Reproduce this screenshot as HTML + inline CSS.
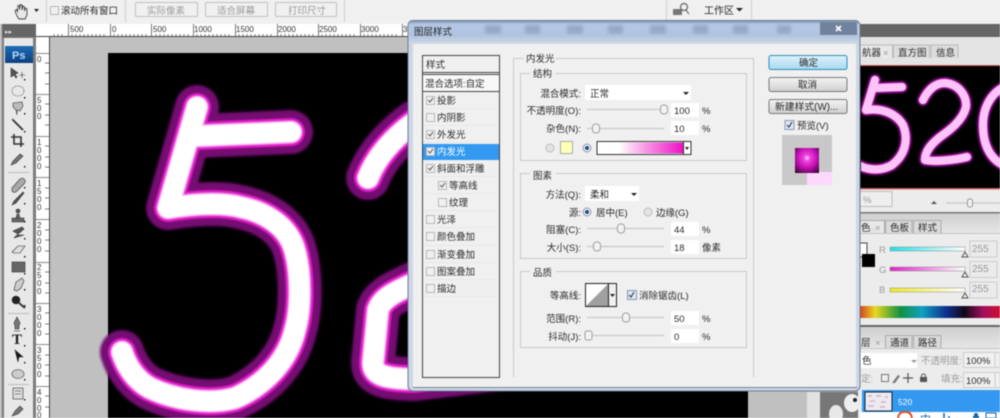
<!DOCTYPE html>
<html><head><meta charset="utf-8"><style>
html,body{margin:0;padding:0;width:1000px;height:418px;overflow:hidden;background:#f0f0f0}
svg{display:block;filter:blur(.45px)}
text{font-family:"Liberation Sans","Noto Sans CJK SC",sans-serif;font-size:9.5px;fill:#2a2a2a}
.r{text-anchor:end}
.g{fill:#9a9a9a}
.s{font-size:8px;fill:#333}
.fs{fill:none;stroke:#c8c8c8}
.cb{fill:#f0f0f0;stroke:#b8b8b8}
.tr{stroke:#cdcdcd;stroke-width:1.5}
.th{fill:#f2f2f2;stroke:#a0a0a0}
</style></head><body>
<svg width="1000" height="418" viewBox="0 0 1000 418" xmlns="http://www.w3.org/2000/svg">
<defs>
<filter id="b1"><feGaussianBlur stdDeviation="1.2"/></filter>
<filter id="b2"><feGaussianBlur stdDeviation=".5"/></filter>
<filter id="b3"><feGaussianBlur stdDeviation="1.8"/></filter>
<linearGradient id="ps" x1="0" y1="0" x2="0" y2="1"><stop offset="0" stop-color="#1c6cb8"/><stop offset="1" stop-color="#0d3f7e"/></linearGradient>
<linearGradient id="mg" x1="0" y1="0" x2="1" y2="0"><stop offset="0" stop-color="#fff"/><stop offset=".25" stop-color="#fff"/><stop offset=".6" stop-color="#f78be0"/><stop offset="1" stop-color="#f010c8"/></linearGradient>
<linearGradient id="tt" x1="0" y1="0" x2="0" y2="1"><stop offset="0" stop-color="#8298b8"/><stop offset=".15" stop-color="#b4c8e6"/><stop offset=".65" stop-color="#b0c4e0"/><stop offset="1" stop-color="#d2dae4"/></linearGradient>
<linearGradient id="btn" x1="0" y1="0" x2="0" y2="1"><stop offset="0" stop-color="#f4f4f4"/><stop offset="1" stop-color="#d0d0d0"/></linearGradient>
<linearGradient id="btb" x1="0" y1="0" x2="0" y2="1"><stop offset="0" stop-color="#dff2fb"/><stop offset="1" stop-color="#a8d8f0"/></linearGradient>
<linearGradient id="tab" x1="0" y1="0" x2="0" y2="1"><stop offset="0" stop-color="#cfcfcf"/><stop offset="1" stop-color="#e6e6e6"/></linearGradient>
<linearGradient id="cy" x1="0" y1="0" x2="1" y2="0"><stop offset="0" stop-color="#20e0e8"/><stop offset="1" stop-color="#fff"/></linearGradient>
<linearGradient id="mz" x1="0" y1="0" x2="1" y2="0"><stop offset="0" stop-color="#e020c8"/><stop offset="1" stop-color="#fff"/></linearGradient>
<linearGradient id="ye" x1="0" y1="0" x2="1" y2="0"><stop offset="0" stop-color="#f0e820"/><stop offset="1" stop-color="#fff"/></linearGradient>
<linearGradient id="sp" x1="0" y1="0" x2="1" y2="0"><stop offset="0" stop-color="#d03020"/><stop offset=".12" stop-color="#e8d820"/><stop offset=".3" stop-color="#109040"/><stop offset=".45" stop-color="#10a0c0"/><stop offset=".62" stop-color="#103090"/><stop offset=".75" stop-color="#100818"/><stop offset=".88" stop-color="#a01060"/><stop offset="1" stop-color="#d01030"/></linearGradient>
<radialGradient id="pv" cx=".5" cy=".4" r=".75"><stop offset="0" stop-color="#ffd0ff"/><stop offset=".18" stop-color="#f040e0"/><stop offset=".55" stop-color="#c010b0"/><stop offset="1" stop-color="#30042c"/></radialGradient>
<clipPath id="nav"><rect x="861" y="66" width="139" height="122"/></clipPath>
<path id="p5" d="M197,107 L168,208 M197,136 L291,132 M168,208 C200,203 225,203 240,207 C265,212 285,225 293,245 C302,270 301,310 295,330 C288,360 265,385 235,398 C210,405 175,400 150,388 C135,380 126,365 122,352 M368,178 C375,160 390,140 415,122 M415,283 C395,292 382,298 378,310 L373,362 C372,375 385,379 415,379 L505,368"/>
<path id="nvp" d="M875,80L866,110M875,88L902,87M866,110C880,108 895,112 903,125C909,140 905,155 892,165C880,172 865,170 855,163M923,100C928,90 935,83 945,83C958,84 967,95 966,107C963,120 950,130 940,137C930,145 925,152 925,160C935,162 955,160 967,157M1015,85C995,85 983,105 983,125C983,150 995,167 1015,167"/>
</defs>

<!-- top option bar -->
<rect width="1000" height="24" fill="#f0f0f0"/>
<path d="M46.500,0V22M125.500,0V22M344.500,0V22M666.500,0V20M751.500,0V20" stroke="#cfcfcf"/>
<path d="M15,11l2,5 2,3h6l2-4v-6l-1.500-1-1,3v-4l-1.500-1-1,4v-5l-1.500-.5-1,5v-4l-1.500 0-.5,6-1-2z" fill="#e8e8e8" stroke="#444" stroke-width=".9"/>
<path d="M34,9h5l-2.500,3z" fill="#222"/>
<rect x="50.500" y="6.500" width="8" height="8" class="cb"/>
<text x="61" y="14">滚动所有窗口</text>
<g fill="#f0f0f0" stroke="#c0c0c0"><rect x="135.500" y="2.500" width="62" height="14" rx="1"/><rect x="205.500" y="2.500" width="62" height="14" rx="1"/><rect x="275.500" y="2.500" width="61" height="14" rx="1"/></g>
<text x="147" y="14" class="g">实际像素</text><text x="217" y="14" class="g">适合屏幕</text><text x="288" y="14" class="g">打印尺寸</text>
<rect x="673" y="9" width="9" height="6" fill="#777"/><circle cx="684" cy="7" r="3.500" fill="none" stroke="#666" stroke-width="1.200"/><path d="M686,10l3,4" stroke="#555"/>
<text x="704" y="14" style="font-size:10px">工作区</text><path d="M736,8h7l-3.500,3.500z" fill="#222"/>

<!-- canvas -->
<rect x="36" y="24" width="825" height="394" fill="#c0c0c0"/>
<rect x="108" y="53" width="640" height="365" fill="#000"/>
<use href="#p5" fill="none" stroke="#740a72" stroke-width="44" stroke-linecap="round" stroke-linejoin="round" filter="url(#b1)"/>
<use href="#p5" fill="none" stroke="#e01cc8" stroke-width="28" stroke-linecap="round" stroke-linejoin="round" filter="url(#b2)"/>
<use href="#p5" fill="none" stroke="#f8a8ee" stroke-width="23" stroke-linecap="round" stroke-linejoin="round" filter="url(#b2)"/>
<use href="#p5" fill="none" stroke="#fff" stroke-width="20" stroke-linecap="round" stroke-linejoin="round" filter="url(#b2)"/>
<rect x="748" y="392" width="60" height="26" fill="#c0c0c0"/><rect x="807" y="392" width="14" height="26" fill="#e2e2e2"/><rect x="820" y="392" width="42" height="26" fill="#777"/>
<ellipse cx="852" cy="403" rx="8" ry="9" fill="#eee"/><ellipse cx="836" cy="414" rx="7" ry="9" fill="#e8e8e8"/><circle cx="855" cy="400" r="2" fill="#222"/>

<!-- rulers -->
<rect x="36" y="24" width="372" height="13" fill="#fff"/><rect x="36" y="37" width="14" height="381" fill="#fff"/>
<path d="M36,36.500H408M49.500,37V418" stroke="#444"/>
<path d="M68.500,24V36M110.500,24V36M151.500,24V36M193.500,24V36M235.500,24V36M277.500,24V36M318.500,24V36M360.500,24V36M402.500,24V36" stroke="#555" stroke-width=".8"/>
<path d="M54,36V34M58,36V34M62,36V34M72,36V34M76,36V34M80,36V34M84,36V34M88,36V34M92,36V34M96,36V34M100,36V34M104,36V34M114,36V34M118,36V34M122,36V34M126,36V34M130,36V34M134,36V34M138,36V34M142,36V34M146,36V34M156,36V34M160,36V34M164,36V34M168,36V34M172,36V34M176,36V34M180,36V34M184,36V34M188,36V34M197,36V34M201,36V34M205,36V34M209,36V34M213,36V34M217,36V34M221,36V34M225,36V34M229,36V34M239,36V34M243,36V34M247,36V34M251,36V34M255,36V34M259,36V34M263,36V34M267,36V34M271,36V34M281,36V34M285,36V34M289,36V34M293,36V34M297,36V34M301,36V34M305,36V34M309,36V34M313,36V34M322,36V34M326,36V34M330,36V34M334,36V34M338,36V34M342,36V34M346,36V34M350,36V34M354,36V34M364,36V34M368,36V34M372,36V34M376,36V34M380,36V34M384,36V34M388,36V34M392,36V34M396,36V34" stroke="#555" stroke-width=".7"/>
<text class="s" x="70" y="32">500</text><text class="s" x="112" y="32">0</text><text class="s" x="153" y="32">500</text><text class="s" x="194" y="32">1000</text><text class="s" x="236" y="32">1500</text><text class="s" x="278" y="32">2000</text><text class="s" x="319" y="32">2500</text><text class="s" x="361" y="32">3000</text><text class="s" x="403" y="32">35</text>
<path d="M36,53.500H49M36,94.500H49M36,136.500H49M36,177.500H49M36,219.500H49M36,262.500H49M36,303.500H49M36,344.500H49M36,386.500H49" stroke="#666" stroke-width=".8"/>
<path d="M45,63H49M45,73H49M45,84H49M45,104H49M45,115H49M45,125H49M45,146H49M45,157H49M45,167H49M45,188H49M45,198H49M45,209H49M45,230H49M45,240H49M45,251H49M45,272H49M45,283H49M45,293H49M45,313H49M45,324H49M45,334H49M45,355H49M45,365H49M45,376H49M45,396H49M45,407H49" stroke="#555" stroke-width=".7"/>
<text class="s" x="37" y="62">0</text>
<text class="s" x="37" y="103">5</text><text class="s" x="37" y="111">0</text><text class="s" x="37" y="119">0</text>
<text class="s" x="37" y="145">1</text><text class="s" x="37" y="153">0</text><text class="s" x="37" y="161">0</text><text class="s" x="37" y="169">0</text>
<text class="s" x="37" y="186">1</text><text class="s" x="37" y="194">5</text><text class="s" x="37" y="202">0</text><text class="s" x="37" y="210">0</text>
<text class="s" x="37" y="228">2</text><text class="s" x="37" y="236">0</text><text class="s" x="37" y="244">0</text><text class="s" x="37" y="252">0</text>
<text class="s" x="37" y="270">2</text><text class="s" x="37" y="278">5</text><text class="s" x="37" y="286">0</text><text class="s" x="37" y="294">0</text>
<text class="s" x="37" y="312">3</text><text class="s" x="37" y="320">0</text><text class="s" x="37" y="328">0</text><text class="s" x="37" y="336">0</text>
<text class="s" x="37" y="353">3</text><text class="s" x="37" y="361">5</text><text class="s" x="37" y="369">0</text><text class="s" x="37" y="377">0</text>
<text class="s" x="37" y="395">4</text><text class="s" x="37" y="403">0</text><text class="s" x="37" y="411">0</text><text class="s" x="37" y="418">0</text>

<!-- tools panel -->
<rect x="0" y="24" width="36" height="394" fill="#7c7c7c"/>
<rect x="0" y="24" width="2" height="394" fill="#b8b8b8"/>
<rect x="2" y="24" width="34" height="13" fill="#666"/>
<text x="5" y="34" style="font-size:7px;fill:#ddd">▸▸</text>
<rect x="4" y="38" width="29" height="380" fill="#e8e8e8"/>
<rect x="5" y="46" width="28" height="17" fill="url(#ps)"/>
<text x="12" y="59" style="font-size:11px;font-weight:bold;fill:#b8d8f8">Ps</text>
<g fill="#555" stroke="#333" stroke-width=".6">
<path d="M11,68l7,5-3,1 2,3-1,1-2-3-3,2z"/><path d="M19,75h6M22,72v6" fill="none"/>
<ellipse cx="18" cy="91" rx="6" ry="5" fill="#e8e8e8" stroke-dasharray="1.500 1"/>
<path d="M13,103l9,-1 1,4-3,5-3-1 0,5-1,-5-3-3z" fill="#bbb"/>
<path d="M12,119l11,11" stroke-width="1.800" fill="none"/><path d="M12,120l2-2" stroke="#bbb" fill="none"/>
<path d="M14,134v10h10M11,137h10v10" fill="none" stroke-width="1.600"/>
<path d="M11,165l2-4 7-7 3,2-7,7z" fill="#777"/>
<path d="M12,188l8-9q3-2 5,1q1,2-1,4l-8,8q-3,1-4-1z" fill="#aaa"/>
<path d="M12,205l2-4 9-9 1,1-8,10z" fill="#555"/>
<path d="M12,218h12v4h-12z M16,218l1-4h2l1,4z" fill="#666"/><circle cx="18" cy="211" r="2"/>
<path d="M13,231l9-4 2,2-7,6 7,0-10,3 4-4z" fill="#555"/>
<path d="M12,252l6-6h7l-5,7h-6z" fill="#ddd"/>
<rect x="12" y="262" width="13" height="10" fill="#666"/>
<path d="M14,290l2-8 6-4 2,3-3,7-4,3z" fill="#ccc"/>
<circle cx="16" cy="300" r="4" fill="#222"/><path d="M19,303l6,5" stroke-width="1.800" fill="none"/>
<path d="M17,317l3,6-1,3v3h-4v-3l-1-3z" fill="#777"/><path d="M14,331h6" fill="none"/>
<path d="M16,351l8,7-4,0-1,5z" transform="translate(-1,-1)" fill="#111"/>
<ellipse cx="18" cy="374" rx="6" ry="4.500" fill="#ccc"/>
<rect x="13" y="388" width="10" height="11" fill="#ddd"/><path d="M15,391h6M15,394h6" fill="none"/>
<path d="M12,416l3-5 5-5 3,3-5,5z" fill="#777"/>
</g>
<text x="12" y="344" style="font-family:'Liberation Serif',serif;font-size:15px;font-weight:bold;fill:#222">T</text>
<path d="M8,172.500H29M8,313.500H29M8,384.500H29" stroke="#bbb"/>
<g fill="#222"><rect x="24" y="79" width="1.500" height="1.500"/><rect x="24" y="97" width="1.500" height="1.500"/><rect x="24" y="113" width="1.500" height="1.500"/><rect x="24" y="131" width="1.500" height="1.500"/><rect x="24" y="166" width="1.500" height="1.500"/><rect x="24" y="187" width="1.500" height="1.500"/><rect x="24" y="203" width="1.500" height="1.500"/><rect x="24" y="221" width="1.500" height="1.500"/><rect x="24" y="238" width="1.500" height="1.500"/><rect x="24" y="256" width="1.500" height="1.500"/><rect x="24" y="273" width="1.500" height="1.500"/><rect x="24" y="289" width="1.500" height="1.500"/><rect x="24" y="305" width="1.500" height="1.500"/><rect x="24" y="328" width="1.500" height="1.500"/><rect x="24" y="345" width="1.500" height="1.500"/><rect x="24" y="362" width="1.500" height="1.500"/><rect x="24" y="379" width="1.500" height="1.500"/><rect x="24" y="399" width="1.500" height="1.500"/></g>

<!-- right panels -->
<rect x="858" y="24" width="142" height="13" fill="#666"/>
<rect x="858" y="37" width="142" height="28" fill="#e4e4e4"/>
<rect x="858" y="65" width="142" height="1.500" fill="#d06060"/>
<rect x="858" y="66" width="142" height="122" fill="#000"/>
<rect x="858" y="188" width="142" height="1.500" fill="#d06060"/>
<g fill="#e8e8e8" stroke="#bbb"><path d="M860,58V45h32.500V58"/><path d="M893.500,58V45h36V58" fill="#dcdcdc"/><path d="M931,58V45h27V58" fill="#dcdcdc"/></g>
<text x="862" y="56">航器</text><text x="883" y="56" class="g">×</text><text x="898" y="56">直方图</text><text x="936" y="56">信息</text>
<g clip-path="url(#nav)" fill="none" stroke-linecap="round" stroke-linejoin="round">
<use href="#nvp" stroke="#4a084a" stroke-width="13" filter="url(#b2)"/>
<use href="#nvp" stroke="#b81cb0" stroke-width="10"/>
<use href="#nvp" stroke="#fcc4f8" stroke-width="8"/>
</g>
<rect x="858" y="189.500" width="142" height="229" fill="#ececec"/>
<rect x="858" y="191.500" width="34" height="15" fill="#eee" stroke="#bbb"/>
<text x="863" y="203" class="g">%</text>
<path d="M931,204l3-3 3,3z" fill="#555"/>
<path d="M946,203H1000" stroke="#ccc" stroke-width="1.500"/><rect x="967.500" y="199" width="5" height="8" rx="2" fill="#f2f2f2" stroke="#999"/>
<rect x="858" y="212" width="142" height="1.500" fill="#777"/>
<rect x="858" y="213.500" width="142" height="20" fill="url(#tab)"/>
<path d="M858,233.500H1000" stroke="#c4c4c4"/>
<g stroke="#aaa"><path d="M858,220.500H884.500V233" fill="#e8e8e8"/><path d="M885.500,233V220.500H912V233" fill="#dadada"/><path d="M913.500,233V220.500H941V233" fill="#dadada"/></g>
<text x="861" y="231">色</text><text x="875" y="231" class="g">×</text><text x="890" y="231">色板</text><text x="918" y="231">样式</text>
<rect x="860" y="243" width="7" height="14" fill="#fff" stroke="#444"/><rect x="862" y="254" width="13" height="13" fill="#000"/>
<text x="879" y="253" class="g">R</text><text x="879" y="273" class="g">G</text><text x="879" y="293" class="g">B</text>
<rect x="890" y="247" width="75" height="4" fill="url(#cy)" stroke="#888" stroke-width=".5"/><rect x="890" y="267" width="75" height="4" fill="url(#mz)" stroke="#888" stroke-width=".5"/><rect x="890" y="288" width="75" height="4" fill="url(#ye)" stroke="#888" stroke-width=".5"/>
<path d="M965,252l3,5h-6zM965,272l3,5h-6zM965,293l3,5h-6z" fill="#f2f2f2" stroke="#555"/>
<rect x="970" y="241" width="27" height="16" fill="#ebebeb" stroke="#ccc"/><rect x="970" y="261.500" width="27" height="16" fill="#ebebeb" stroke="#ccc"/><rect x="970" y="282" width="27" height="16" fill="#ebebeb" stroke="#ccc"/>
<text x="972" y="252" style="font-size:10px;fill:#999">255</text><text x="972" y="272" style="font-size:10px;fill:#999">255</text><text x="972" y="292" style="font-size:10px;fill:#999">255</text>
<rect x="858" y="306" width="142" height="12" fill="url(#sp)"/>
<rect x="858" y="325" width="142" height="2" fill="#666"/>
<rect x="858" y="327" width="142" height="21" fill="url(#tab)"/>
<path d="M858,348.500H1000" stroke="#c4c4c4"/>
<g stroke="#aaa"><path d="M885.500,348V335.500H912V348" fill="#dadada"/><path d="M913.500,348V335.500H941V348" fill="#dadada"/></g>
<text x="861" y="346">层</text><text x="875" y="346" class="g">×</text><text x="890" y="346">通道</text><text x="918" y="346">路径</text>
<rect x="858" y="353" width="59" height="15" fill="#fff"/><text x="862" y="364">色</text><path d="M911,360h6l-3,3z" fill="#999"/>
<text x="921" y="364" class="g">不透明度:</text>
<rect x="963.500" y="352.500" width="32" height="15" fill="#f0f0f0" stroke="#ccc"/><text x="966" y="364">100%</text><rect x="995" y="352.500" width="5" height="15" fill="#f0f0f0" stroke="#ccc"/>
<text x="861" y="382" class="g">定:</text>
<rect x="881.500" y="374.500" width="7" height="7" fill="#eee" stroke="#777"/><path d="M892,383l6-8 2,1-5,7z" fill="#777"/><path d="M908,373v10M903,378h10" stroke="#555" stroke-width="1.200"/><rect x="920" y="377" width="7" height="5" fill="#555"/><circle cx="923.500" cy="376" r="2" fill="none" stroke="#555"/>
<text x="941" y="382" class="g">填充:</text>
<rect x="963.500" y="372.500" width="32" height="15" fill="#f0f0f0" stroke="#ccc"/><text x="966" y="384">100%</text><rect x="995" y="372.500" width="5" height="15" fill="#f0f0f0" stroke="#ccc"/>
<rect x="862" y="390" width="138" height="22" fill="#3399f0"/>
<rect x="865" y="392" width="27" height="19" fill="#eeeaf0" stroke="#123"/>
<path d="M868,396h4M876,396h5M885,397h3M870,401h5M881,402h5M868,406h6M880,407h5" stroke="#d8c0d8" stroke-width="2"/>
<text x="898" y="405" style="font-size:8.500px;fill:#fff">520</text>
<rect x="860" y="412" width="140" height="6" fill="#fff"/>
<path d="M898,418q1-7 8-6q5 0 6,6" fill="none" stroke="#e05020" stroke-width="2"/>
<text x="920" y="423" style="font-size:11px;fill:#1060a0">中</text>
<path d="M944,413v5M949,416v2" stroke="#1060a0" stroke-width="1.500"/>
<circle cx="976" cy="415" r="2" fill="#1060a0"/><rect x="973" y="416" width="6" height="2" fill="#1060a0"/>
<rect x="986" y="413" width="10" height="5" fill="none" stroke="#1060a0"/>

<!-- dialog -->
<rect x="408" y="20.500" width="452" height="370.500" rx="5" fill="#cdd6e4" stroke="#6a7a90"/>
<rect x="409" y="21" width="450" height="23" rx="4" fill="url(#tt)"/>
<g fill="#93a9c8" filter="url(#b3)"><rect x="485" y="25" width="16" height="9"/><rect x="525" y="25" width="15" height="9"/><rect x="567" y="25" width="16" height="9"/><rect x="608" y="25" width="15" height="9"/><rect x="650" y="25" width="16" height="9"/><rect x="693" y="25" width="15" height="9"/><rect x="733" y="25" width="15" height="9"/><rect x="777" y="25" width="14" height="9"/></g>
<rect x="820" y="22" width="37" height="13" fill="#71839c"/>
<path d="M836,26l5,5M841,26l-5,5" stroke="#fff" stroke-width="1.800"/>
<text x="414" y="35" style="font-size:9.500px;fill:#222">图层样式</text>
<rect x="413" y="44" width="443" height="343" fill="#f0f0f0"/>
<path d="M413,387.500H857" stroke="#5a6578" stroke-width=".8"/>

<!-- style list -->
<rect x="422.500" y="55.500" width="77" height="322" fill="#f0f0f0" stroke="#444"/>
<path d="M423,72.500H499M423,74.500H499M423,91.500H499" stroke="#444"/>
<rect x="423" y="75" width="76" height="16" fill="#f8f8f8"/>
<text x="426" y="68">样式</text><text x="425" y="87">混合选项:自定</text>
<rect x="423" y="144" width="76" height="16" fill="#3399f0"/>
<path d="M423,108.500H498M423,125.500H498M423,142.500H498M423,176.500H498M423,193.500H498M423,210.500H498M423,227.500H498M423,245.500H498M423,262.500H498M423,279.500H498M423,296.500H498" stroke="#e8e8e8"/>
<rect class="cb" x="426.500" y="96.500" width="8" height="8"/><rect class="cb" x="426.500" y="113.500" width="8" height="8"/><rect class="cb" x="426.500" y="130.500" width="8" height="8"/><rect class="cb" x="426.500" y="147.500" width="8" height="8"/><rect class="cb" x="426.500" y="164.500" width="8" height="8"/><rect class="cb" x="438.500" y="181.500" width="8" height="8"/><rect class="cb" x="438.500" y="198.500" width="8" height="8"/><rect class="cb" x="426.500" y="215.500" width="8" height="8"/><rect class="cb" x="426.500" y="232.500" width="8" height="8"/><rect class="cb" x="426.500" y="250.500" width="8" height="8"/><rect class="cb" x="426.500" y="267.500" width="8" height="8"/><rect class="cb" x="426.500" y="284.500" width="8" height="8"/>
<path d="M428,100l2,2 3-4M428,134l2,2 3-4M428,151l2,2 3-4M428,168l2,2 3-4M440,185l2,2 3-4" fill="none" stroke="#666" stroke-width="1.100"/>
<text x="437" y="104">投影</text><text x="437" y="121">内阴影</text><text x="437" y="138">外发光</text><text x="437" y="155" style="fill:#fff">内发光</text><text x="437" y="172">斜面和浮雕</text><text x="449" y="189">等高线</text><text x="449" y="206">纹理</text><text x="437" y="223">光泽</text><text x="437" y="240">颜色叠加</text><text x="437" y="258">渐变叠加</text><text x="437" y="275">图案叠加</text><text x="437" y="292">描边</text>

<!-- fieldsets -->
<path d="M524,58.500H513.500V377M556,58.500H753.500V377" class="fs"/>
<text x="526" y="62">内发光</text>
<path d="M530,73.500H520.500V160.500H746.500V73.500H556" class="fs"/>
<text x="533" y="77">结构</text>
<path d="M530,173.500H520.500V258.500H746.500V173.500H556" class="fs"/>
<text x="533" y="179">图素</text>
<path d="M530,271.500H520.500V347.500H746.500V271.500H556" class="fs"/>
<text x="533" y="276">品质</text>

<!-- 结构 -->
<text x="581" y="97" class="r">混合模式:</text>
<rect x="585" y="85" width="106" height="15" fill="#fff"/><text x="590" y="97">正常</text><path d="M683,92h6l-3,3z" fill="#222"/>
<text x="581" y="114" class="r">不透明度(O):</text>
<path d="M587,109.500H664" class="tr"/><rect x="660.500" y="105" width="7" height="9" rx="3" class="th"/>
<rect x="671" y="103" width="28" height="14" fill="#fff"/><text x="674" y="114">100</text><text x="702" y="114">%</text>
<text x="581" y="132" class="r">杂色(N):</text>
<path d="M587,128.500H664" class="tr"/><rect x="592.500" y="124" width="7" height="9" rx="3" class="th"/>
<rect x="671" y="121" width="28" height="14" fill="#fff"/><text x="674" y="132">10</text><text x="702" y="132">%</text>
<circle cx="550" cy="148" r="4" fill="#e4e4e4" stroke="#bbb"/>
<rect x="560.500" y="141.500" width="12" height="12" fill="#ffffb8" stroke="#aaa"/>
<circle cx="587" cy="148" r="4" fill="#e8eef8" stroke="#99a"/><circle cx="587" cy="148" r="2" fill="#234a80"/>
<rect x="597" y="141.500" width="94" height="13" fill="#fff" stroke="#333"/>
<rect x="598" y="142.500" width="85" height="11" fill="url(#mg)"/>
<path d="M683.500,142V154" stroke="#333"/><path d="M685,147h4l-2,3z" fill="#222"/>

<!-- 图素 -->
<text x="581" y="198" class="r">方法(Q):</text>
<rect x="585" y="186" width="54" height="15" fill="#fff"/><text x="590" y="198">柔和</text><path d="M631,193h6l-3,3z" fill="#222"/>
<text x="581" y="216" class="r">源:</text>
<circle cx="587" cy="212" r="4" fill="#e8eef8" stroke="#99a"/><circle cx="587" cy="212" r="2" fill="#234a80"/>
<text x="596" y="216">居中(E)</text>
<circle cx="648" cy="212" r="4" fill="#e4e4e4" stroke="#bbb"/>
<text x="656" y="216">边缘(G)</text>
<text x="581" y="233" class="r">阻塞(C):</text>
<path d="M587,228.500H664" class="tr"/><rect x="617.500" y="224" width="7" height="9" rx="3" class="th"/>
<rect x="671" y="222" width="28" height="14" fill="#fff"/><text x="674" y="233">44</text><text x="702" y="233">%</text>
<text x="581" y="251" class="r">大小(S):</text>
<path d="M587,246.500H664" class="tr"/><rect x="593.500" y="242" width="7" height="9" rx="3" class="th"/>
<rect x="671" y="240" width="28" height="14" fill="#fff"/><text x="674" y="251">18</text><text x="702" y="251">像素</text>

<!-- 品质 -->
<text x="581" y="299" class="r">等高线:</text>
<rect x="585.500" y="283.500" width="31" height="23" fill="#fff" stroke="#222"/>
<path d="M586,306L608,284V306z" fill="#a0a0a0"/>
<path d="M608.500,284V306" stroke="#222"/><rect x="609" y="284" width="7" height="22" fill="#f0f0f0"/><path d="M610,294h5l-2.500,3z" fill="#222"/>
<rect x="627.500" y="290.500" width="9" height="9" fill="#dde6f4" stroke="#8898b0"/>
<path d="M629,295l2,2 3-5" fill="none" stroke="#345" stroke-width="1.200"/>
<text x="639" y="299">消除锯齿(L)</text>
<text x="581" y="322" class="r">范围(R):</text>
<path d="M587,317.500H664" class="tr"/><rect x="622.500" y="313" width="7" height="9" rx="3" class="th"/>
<rect x="671" y="311" width="28" height="14" fill="#fff"/><text x="674" y="322">50</text><text x="702" y="322">%</text>
<text x="581" y="340" class="r">抖动(J):</text>
<path d="M587,335.500H664" class="tr"/><rect x="585" y="331" width="7" height="9" rx="2" class="th"/>
<rect x="671" y="329" width="28" height="14" fill="#fff"/><text x="674" y="340">0</text><text x="702" y="340">%</text>

<!-- buttons -->
<rect x="769" y="55.500" width="78" height="14" rx="2" fill="url(#btb)" stroke="#2c8cb8"/><text x="799" y="66">确定</text>
<rect x="769" y="77.500" width="78" height="14" rx="2" fill="url(#btn)" stroke="#777"/><text x="798" y="88">取消</text>
<rect x="769" y="99.500" width="78" height="14" rx="2" fill="url(#btn)" stroke="#777"/><text x="775" y="110" style="font-size:9.800px">新建样式(W)...</text>
<rect x="785" y="120.500" width="9" height="9" fill="#dde6f4" stroke="#8898b0"/>
<path d="M787,125l2,2 3-5" fill="none" stroke="#345" stroke-width="1.200"/>
<text x="797" y="129">预览(V)</text>
<rect x="782" y="135" width="50" height="50" fill="#c8c8c8"/>
<rect x="807" y="172" width="25" height="13" fill="#fcd8fc"/>
<rect x="795" y="148" width="24" height="25" fill="url(#pv)"/>
</svg>
</body></html>
